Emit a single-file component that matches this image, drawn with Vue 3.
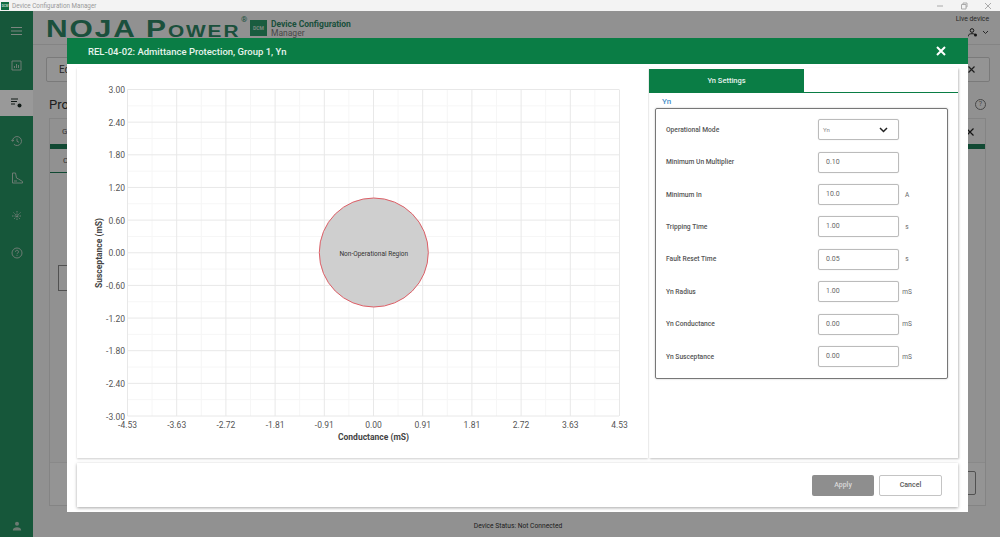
<template>
  <div class="app">
    <div class="titlebar">
      <span class="app-icon">DCM</span>
      <span class="app-name">Device Configuration Manager</span>
      <div class="win-controls">
        <svg width="8" height="8" viewBox="0 0 8 8"><path d="M1 4h6" stroke="#aaa" fill="none" /></svg>
        <svg width="8" height="8" viewBox="0 0 8 8"><path d="M1.5 2.500h4.500v4.500h-4.500zM3 2.500v-1.500h4v4h-1" stroke="#aaa" fill="none" /></svg>
        <svg width="8" height="8" viewBox="0 0 8 8"><path d="M1 1l6 6M7 1l-6 6" stroke="#aaa" fill="none" /></svg>
      </div>
    </div>

    <div class="shell">
      <nav class="sidebar">
        <div class="nav-item nav-menu">
          <svg width="11" height="8" viewBox="0 0 11 8"><path d="M0 .5h11M0 4h11M0 7.500h11" stroke="#cfe0d6" fill="none" /></svg>
        </div>
        <div class="nav-item nav-chart">
          <svg width="11" height="11" viewBox="0 0 11 11"><path d="M1 1h9v9h-9zM3.500 8v-2M5.500 8v-4M7.500 8v-3" stroke="#b5cdbf" fill="none" /></svg>
        </div>
        <div class="nav-item nav-active">
          <svg width="11" height="10" viewBox="0 0 11 10"><path d="M0 1h7M0 3.500h6M0 6h4" stroke="#1c2b25" stroke-width="1" fill="none" /><circle cx="8.500" cy="7.500" r="2" fill="#1c2b25" /></svg>
        </div>
        <div class="nav-item">
          <svg width="12" height="12" viewBox="0 0 12 12"><path d="M1.500 6a4.500 4.500 0 1 1 1.400 3.300M.5 5l1 1.300L3 5.200M6 3.500v2.800l2 1" stroke="#b5cdbf" fill="none" /></svg>
        </div>
        <div class="nav-item">
          <svg width="12" height="12" viewBox="0 0 12 12"><path d="M1.500 1v10h10v-1.500l-4-2.500-2-1-1-5zM3 9h3" stroke="#b5cdbf" fill="none" /></svg>
        </div>
        <div class="nav-item">
          <svg width="12" height="12" viewBox="0 0 12 12"><path d="M6 1v10M1 6h10M2.500 2.500l7 7M9.500 2.500l-7 7" stroke="#b5cdbf" stroke-dasharray="1.500 1" fill="none" /></svg>
        </div>
        <div class="nav-item">
          <svg width="12" height="12" viewBox="0 0 12 12"><circle cx="6" cy="6" r="5" stroke="#b5cdbf" fill="none" /><path d="M4.500 4.800a1.500 1.500 0 1 1 2.300 1.200c-.5.300-.8.600-.8 1.200M6 8.200v.8" stroke="#b5cdbf" fill="none" /></svg>
        </div>
        <div class="nav-user">
          <svg width="10" height="10" viewBox="0 0 10 10"><circle cx="5" cy="2.800" r="2" fill="#b5cdbf" /><path d="M.8 9.500c0-2.500 2-3.200 4.200-3.200s4.200.7 4.200 3.200z" fill="#b5cdbf" /></svg>
        </div>
      </nav>

      <div class="main">
        <header class="topbar">
          <div class="logo"><span class="logo-text">NOJA Power</span><span class="logo-reg">®</span></div>
          <span class="dcm-badge">DCM</span>
          <div class="dcm-name">
            <strong>Device Configuration</strong>
            <span>Manager</span>
          </div>
          <div class="live">
            <span>Live device</span>
            <svg width="21" height="9" viewBox="0 0 21 9"><circle cx="4" cy="2.500" r="1.800" fill="none" stroke="#222" /><path d="M0 8.500c0-2 2-2.800 4-2.800s3 .6 3.500 1.500" fill="none" stroke="#222" /><circle cx="7.500" cy="7" r="1.500" fill="#222" /><path d="M15 3l2.500 2.500L20 3" fill="none" stroke="#444" /></svg>
          </div>
        </header>
        <div class="page">
          <div class="bg-card-row">
            <div class="bg-card">Ed</div>
            <div class="bg-card bg-card-end">
              <svg width="7" height="7" viewBox="0 0 7 7"><path d="M.5.5l6 6M6.500.5l-6 6" stroke="#333" stroke-width="1.200" fill="none" /></svg>
            </div>
          </div>
          <div class="bg-title-row">
            <span class="bg-title">Pro</span>
            <span class="bg-help">?</span>
          </div>
          <div class="bg-panel">
            <div class="bg-tab">
              <span>G</span>
              <svg width="8" height="8" viewBox="0 0 8 8"><path d="M.5.5l7 7M7.500.5l-7 7" stroke="#222" stroke-width="1.200" fill="none" /></svg>
            </div>
            <div class="bg-bar"></div>
            <div class="bg-subtab">C</div>
            <div class="bg-box"></div>
            <div class="bg-footer"><span class="bg-footer-btn"></span></div>
          </div>
        </div>
        <footer class="statusbar">Device Status: Not Connected</footer>
      </div>
    </div>

    <div class="overlay"></div>

    <section class="modal">
      <div class="modal-head">
        <h2>REL-04-02: Admittance Protection, Group 1, Yn</h2>
        <svg width="10" height="10" viewBox="0 0 10 10"><path d="M1 1l8 8M9 1l-8 8" stroke="#fff" stroke-width="2" fill="none" /></svg>
      </div>

      <div class="modal-body">
        <div class="chart-card">
          <svg width="571" height="390" viewBox="0 0 571 390" class="chart">
            <line v-for="x in minorX" :key="'mx' + x" :x1="x" :x2="x" y1="21.500" y2="348" class="minor" />
            <line v-for="y in minorY" :key="'my' + y" x1="50.500" x2="542" :y1="y" :y2="y" class="minor" />
            <line v-for="t in xTicks" :key="'x' + t.label" :x1="t.pos" :x2="t.pos" y1="21.500" y2="348" class="major" />
            <line v-for="t in yTicks" :key="'y' + t.label" x1="50.500" x2="542" :y1="t.pos" :y2="t.pos" class="major" />
            <circle cx="296.800" cy="184.500" r="54.500" fill="#cfcfcf" stroke="#dd5f67" stroke-width="1" />
            <text x="296.800" y="188" text-anchor="middle" class="region">Non-Operational Region</text>
            <text v-for="t in yTicks" :key="'yl' + t.label" x="48" :y="t.pos + 3.500" text-anchor="end" class="tick">{{ t.label }}</text>
            <text v-for="t in xTicks" :key="'xl' + t.label" :x="t.pos" y="359.500" text-anchor="middle" class="tick">{{ t.label }}</text>
            <text x="296.500" y="372" text-anchor="middle" class="axis">Conductance (mS)</text>
            <text transform="translate(25 185) rotate(-90)" text-anchor="middle" class="axis">Susceptance (mS)</text>
          </svg>
        </div>

        <div class="settings">
          <div class="tabs">
            <div class="tab">Yn Settings</div>
          </div>
          <div class="group-label">Yn</div>
          <div class="group">
            <div v-for="f in fields" :key="f.label" class="field">
              <label>{{ f.label }}</label>
              <div v-if="f.select" class="input select">
                <span>{{ f.value }}</span>
                <svg width="9" height="6" viewBox="0 0 9 6"><path d="M1 1l3.500 3.500L8 1" stroke="#222" stroke-width="1.500" fill="none" /></svg>
              </div>
              <div v-else class="input">{{ f.value }}</div>
              <span class="unit">{{ f.unit }}</span>
            </div>
          </div>
        </div>
      </div>

      <div class="modal-foot">
        <button class="btn btn-apply">Apply</button>
        <button class="btn btn-cancel">Cancel</button>
      </div>
    </section>
  </div>
</template>

<script setup>
const xLabels = ['-4.53', '-3.63', '-2.72', '-1.81', '-0.91', '0.00', '0.91', '1.81', '2.72', '3.63', '4.53']
const yLabels = ['3.00', '2.40', '1.80', '1.20', '0.60', '0.00', '-0.60', '-1.20', '-1.80', '-2.40', '-3.00']

const stepX = 49.2
const stepY = 32.65

const xTicks = xLabels.map((label, i) => ({ label, pos: 50.5 + i * stepX }))
const yTicks = yLabels.map((label, i) => ({ label, pos: 21.5 + i * stepY }))
const minorX = xLabels.slice(1).map((_, i) => 50.5 + (i + 0.5) * stepX)
const minorY = yLabels.slice(1).map((_, i) => 21.5 + (i + 0.5) * stepY)

const fields = [
  { label: 'Operational Mode', value: 'Yn', unit: '', select: true },
  { label: 'Minimum Un Multiplier', value: '0.10', unit: '' },
  { label: 'Minimum In', value: '10.0', unit: 'A' },
  { label: 'Tripping Time', value: '1.00', unit: 's' },
  { label: 'Fault Reset Time', value: '0.05', unit: 's' },
  { label: 'Yn Radius', value: '1.00', unit: 'mS' },
  { label: 'Yn Conductance', value: '0.00', unit: 'mS' },
  { label: 'Yn Susceptance', value: '0.00', unit: 'mS' },
]
</script>

<style>
html,
body {
  margin: 0;
  overflow: hidden;
}
</style>

<style scoped>
.app {
  position: relative;
  width: 1000px;
  height: 537px;
  overflow: hidden;
  display: flex;
  flex-direction: column;
  font-family: Roboto, "Liberation Sans", sans-serif;
  background: #f2f2f2;
}

.titlebar {
  height: 11px;
  flex: none;
  display: flex;
  align-items: center;
  background: #f3f3f3;
  position: relative;
  z-index: 3;
}

.app-icon {
  width: 8px;
  height: 8px;
  margin-left: 1px;
  background: #0f6b40;
  color: #fff;
  font-size: 3px;
  line-height: 8px;
  text-align: center;
}

.app-name {
  margin-left: 3px;
  font-size: 6.300px;
  color: #999;
}

.win-controls {
  margin-left: auto;
  margin-right: 8px;
  display: flex;
  gap: 16px;
}

.shell {
  flex: 1;
  display: flex;
  min-height: 0;
}

.sidebar {
  width: 33px;
  flex: none;
  background: #259161;
  display: flex;
  flex-direction: column;
}

.nav-item {
  height: 37.500px;
  display: flex;
  align-items: center;
  justify-content: center;
  flex: none;
}

.nav-menu {
  height: 35px;
  margin-top: 2px;
}

.nav-chart {
  height: 31px;
  margin-top: 2px;
  margin-bottom: 9px;
}

.nav-active {
  height: 26px;
  background: #fff;
  margin-bottom: 6px;
}

.nav-user {
  margin-top: auto;
  height: 16px;
  display: flex;
  align-items: flex-start;
  justify-content: center;
}

.main {
  flex: 1;
  display: flex;
  flex-direction: column;
  min-width: 0;
}

.topbar {
  height: 34px;
  flex: none;
  display: flex;
  align-items: center;
  background: #f2f2f2;
  border-bottom: 1px solid #ddd;
  box-sizing: border-box;
  padding-left: 13px;
  position: relative;
}

.logo {
  position: relative;
  flex: none;
  width: 204px;
  height: 30px;
  white-space: nowrap;
}

.logo-text {
  display: inline-block;
  font-family: "Liberation Sans", sans-serif;
  font-variant: small-caps;
  font-weight: 700;
  font-size: 23px;
  letter-spacing: 1.500px;
  line-height: 30px;
  margin-top: 1px;
  color: #2d8564;
  transform: scaleX(1.3);
  transform-origin: left center;
}

.logo-reg {
  position: absolute;
  left: 195px;
  top: 2px;
  font-size: 8px;
  line-height: 10px;
  color: #2d8564;
}

.dcm-badge {
  width: 17px;
  height: 16px;
  margin-left: 0;
  background: #2b9a6a;
  color: #cfe0d6;
  font-size: 5px;
  font-weight: 700;
  line-height: 16px;
  text-align: center;
}

.dcm-name {
  margin-left: 4px;
  display: flex;
  flex-direction: column;
  font-size: 8.500px;
  line-height: 8.500px;
  margin-top: 2px;
  color: #2d8564;
}

.dcm-name span {
  color: #777;
}

.live {
  position: absolute;
  right: 11px;
  top: 4px;
  display: flex;
  flex-direction: column;
  align-items: flex-end;
  gap: 5px;
  font-size: 6.800px;
  color: #444;
}

.page {
  flex: 1;
  min-height: 0;
  padding: 12px 10px 0 13px;
  display: flex;
  flex-direction: column;
}

.bg-card-row {
  display: flex;
  justify-content: space-between;
  height: 25px;
  flex: none;
}

.bg-card {
  width: 60px;
  background: #f7f7f7;
  border: 1px solid #ccc;
  border-radius: 2px;
  box-sizing: border-box;
  font-size: 10px;
  line-height: 23px;
  padding-left: 12px;
  color: #444;
}

.bg-card-end {
  display: flex;
  align-items: center;
  justify-content: flex-end;
  padding: 0 14px 0 0;
}

.bg-title-row {
  display: flex;
  justify-content: space-between;
  align-items: center;
  height: 36px;
  box-sizing: border-box;
  padding: 8px 3px 0;
  flex: none;
}

.bg-title {
  font-size: 13px;
  color: #333;
}

.bg-help {
  width: 9px;
  height: 9px;
  border: 1px solid #777;
  border-radius: 50%;
  font-size: 7px;
  line-height: 9px;
  text-align: center;
  color: #777;
  margin-right: 1px;
}

.bg-panel {
  position: relative;
  margin: 0 4px 0 3px;
  height: 388px;
  border: 1px solid #dcdcdc;
  box-sizing: border-box;
}

.bg-tab {
  display: flex;
  justify-content: space-between;
  align-items: center;
  font-size: 8px;
  color: #555;
  padding: 0 11px 0 12px;
  height: 25px;
  box-sizing: border-box;
}

.bg-bar {
  height: 5px;
  background: #1d7a55;
}

.bg-subtab {
  font-size: 8px;
  line-height: 11px;
  color: #555;
  padding: 6px 13px 6px;
  border-bottom: 1px solid #1d7a55;
  width: 80px;
}

.bg-box {
  position: absolute;
  left: 8px;
  top: 146px;
  width: 40px;
  height: 24px;
  border: 1px solid #888;
}

.bg-footer {
  position: absolute;
  left: 0;
  right: 0;
  bottom: 0;
  height: 42px;
  background: #f7f7f7;
  border-top: 1px solid #e4e4e4;
}

.bg-footer-btn {
  position: absolute;
  right: 9px;
  top: 8px;
  width: 40px;
  height: 22px;
  border: 1px solid #888;
  border-radius: 2px;
}

.statusbar {
  height: 25px;
  flex: none;
  display: flex;
  align-items: center;
  justify-content: center;
  padding-left: 3px;
  padding-top: 2px;
  box-sizing: border-box;
  font-size: 6.700px;
  color: #333;
  background: #f2f2f2;
}

.overlay {
  position: absolute;
  inset: 11px 0 0;
  background: rgba(0, 0, 0, 0.4);
  z-index: 1;
}

.modal {
  position: absolute;
  left: 67px;
  top: 38px;
  width: 901px;
  height: 474px;
  background: #fff;
  z-index: 2;
  display: flex;
  flex-direction: column;
}

.modal-head {
  height: 26px;
  flex: none;
  background: #0a7d45;
  display: flex;
  align-items: center;
  justify-content: space-between;
  padding: 0 22px 0 21px;
}

.modal-head h2 {
  margin: 0;
  font-size: 9.500px;
  font-weight: 500;
  color: #e6f3ec;
}

.modal-body {
  display: flex;
  flex: none;
  height: 390px;
  margin: 4px 10px 0;
  gap: 1px;
}

.chart-card {
  width: 571px;
  flex: none;
  box-shadow: 0 1px 2px rgba(0, 0, 0, 0.2);
}

.chart {
  display: block;
}

.minor {
  stroke: #f6f6f6;
  stroke-width: 1;
}

.major {
  stroke: #e8e8e8;
  stroke-width: 1;
}

.tick {
  font-size: 8.500px;
  fill: #555;
}

.axis {
  font-size: 8.500px;
  font-weight: 700;
  fill: #444;
}

.region {
  font-size: 6.500px;
  fill: #333;
}

.settings {
  flex: 1;
  box-shadow: 1px 1px 2px rgba(0, 0, 0, 0.25);
  display: flex;
  flex-direction: column;
}

.tabs {
  height: 24px;
  flex: none;
  margin-top: 1px;
  border-bottom: 1px solid #0a7d45;
  box-sizing: border-box;
}

.tab {
  width: 155px;
  height: 23px;
  background: #0a7d45;
  color: #e6f3ec;
  font-size: 7.500px;
  font-weight: 500;
  line-height: 23px;
  text-align: center;
}

.group-label {
  margin: 3px 0 0 13px;
  height: 11px;
  font-size: 8px;
  line-height: 11px;
  font-weight: 500;
  color: #4a90c8;
}

.group {
  margin: 1px 10px 0 6px;
  height: 270.500px;
  box-sizing: border-box;
  border: 1px solid #777;
  border-radius: 2px;
  box-shadow: 0 0 2px rgba(0, 0, 0, 0.25);
  padding: 10.300px 0 0 10px;
  display: flex;
  flex-direction: column;
  gap: 11.400px;
}

.field {
  display: flex;
  align-items: center;
  height: 21px;
  flex: none;
}

.field label {
  width: 152px;
  flex: none;
  font-size: 6.700px;
  font-weight: 500;
  color: #555;
}

.input {
  width: 81px;
  height: 21px;
  box-sizing: border-box;
  flex: none;
  border: 1px solid #bbb;
  border-radius: 2px;
  box-shadow: 0 0 1px rgba(0, 0, 0, 0.2);
  font-size: 7px;
  line-height: 19px;
  padding-left: 7px;
  color: #666;
}

.select {
  display: flex;
  align-items: center;
  justify-content: space-between;
  padding: 0 10px 0 4px;
  font-size: 6px;
  color: #888;
}

.unit {
  margin-left: 1px;
  width: 14px;
  text-align: center;
  font-size: 6.500px;
  color: #666;
}

.modal-foot {
  height: 44px;
  flex: none;
  margin: 5px 10px 0;
  display: flex;
  align-items: center;
  justify-content: flex-end;
  gap: 5px;
  padding-right: 16px;
  box-shadow: 0 1px 3px rgba(0, 0, 0, 0.35);
}

.btn {
  height: 21px;
  border-radius: 2px;
  font-family: inherit;
  font-size: 7px;
  font-weight: 500;
  padding: 0;
}

.btn-apply {
  width: 62px;
  background: #8e8e8e;
  border: none;
  color: #d8d8d8;
}

.btn-cancel {
  width: 63px;
  background: #fff;
  border: 1px solid #c4c4c4;
  color: #555;
}
</style>
